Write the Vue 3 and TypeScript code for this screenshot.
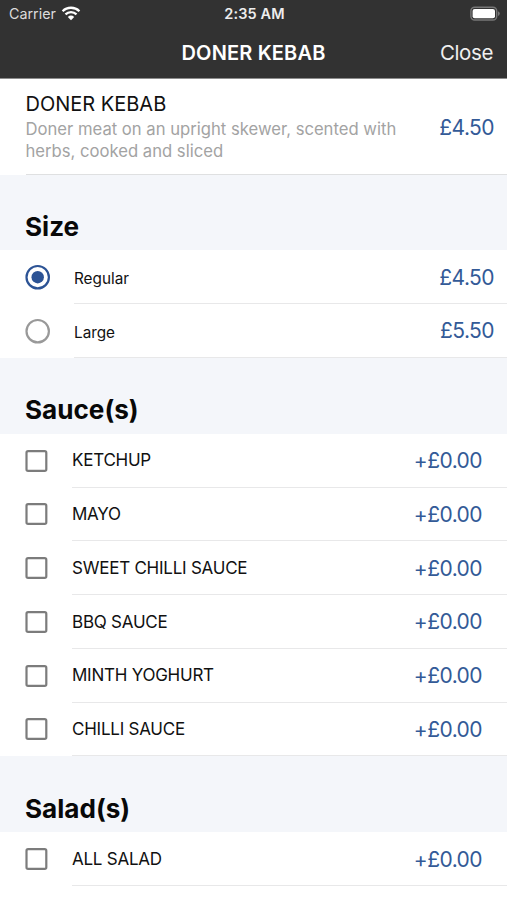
<script setup lang="ts">
import { ref } from 'vue'

interface SizeOption {
  name: string
  price: string
}

interface ExtraGroup {
  title: string
  options: SizeOption[]
}

const sizes: SizeOption[] = [
  { name: 'Regular', price: '£4.50' },
  { name: 'Large', price: '£5.50' },
]

const groups: ExtraGroup[] = [
  {
    title: 'Sauce(s)',
    options: ['KETCHUP', 'MAYO', 'SWEET CHILLI SAUCE', 'BBQ SAUCE', 'MINTH YOGHURT', 'CHILLI SAUCE'].map(
      (name) => ({ name, price: '+£0.00' }),
    ),
  },
  { title: 'Salad(s)', options: [{ name: 'ALL SALAD', price: '+£0.00' }] },
]

const selected = ref('Regular')
const extras = ref<string[]>([])

function toggle(name: string) {
  extras.value = extras.value.includes(name)
    ? extras.value.filter((n) => n !== name)
    : [...extras.value, name]
}
</script>

<template>
  <div class="screen">
    <header class="top">
      <div class="status">
        <div class="carrier">
          <span class="carrier-name">Carrier</span>
          <svg class="wifi" viewBox="0 0 20 15" width="20" height="15">
            <path d="M1.6 5.2 A12 12 0 0 1 18.4 5.2" />
            <path d="M4.5 8.4 A7.8 7.8 0 0 1 15.5 8.4" />
            <path class="dot" d="M6.8 10.9 A4.8 4.8 0 0 1 13.2 10.9 L10 14.2 Z" />
          </svg>
        </div>
        <span class="time">2:35 AM</span>
        <svg class="battery" viewBox="0 0 30 16" width="30" height="16">
          <rect class="shell" x="0.9" y="1.2" width="25.8" height="12.8" rx="3.8" />
          <rect class="charge" x="2.6" y="2.9" width="22.4" height="9.4" rx="2.1" />
          <path class="cap" d="M28 5.3 Q29.8 6 29.8 7.6 Q29.8 9.2 28 9.9 Z" />
        </svg>
      </div>
      <div class="nav">
        <span></span>
        <h1 class="nav-title">DONER KEBAB</h1>
        <button class="close" type="button">Close</button>
      </div>
    </header>

    <section class="product">
      <div class="product-info">
        <div class="product-name">DONER KEBAB</div>
        <div class="product-desc">Doner meat on an upright skewer, scented with<br />herbs, cooked and sliced</div>
      </div>
      <span class="price">£4.50</span>
    </section>

    <section class="group">
      <h2 class="group-title size-title">Size</h2>
      <div v-for="size in sizes" :key="size.name" class="row" @click="selected = size.name">
        <svg class="radio" :class="{ on: selected === size.name }" viewBox="0 0 26 26" width="26" height="26">
          <circle class="ring" cx="12.7" cy="13.2" r="11.2" />
          <circle v-if="selected === size.name" class="core" cx="12.7" cy="13.2" r="6.2" />
        </svg>
        <div class="row-body radio-body">
          <span class="size-name">{{ size.name }}</span>
          <span class="price">{{ size.price }}</span>
        </div>
      </div>
    </section>

    <section v-for="group in groups" :key="group.title" class="group">
      <h2 class="group-title">{{ group.title }}</h2>
      <div v-for="option in group.options" :key="option.name" class="row" @click="toggle(option.name)">
        <svg class="check" viewBox="0 0 23 22" width="23" height="22">
          <rect x="1.5" y="1.1" width="19.8" height="19.8" rx="1.6" />
          <path v-if="extras.includes(option.name)" d="M5.4 11 L9.9 15.5 L17.4 7" />
        </svg>
        <div class="row-body check-body">
          <span class="extra-name">{{ option.name }}</span>
          <span class="price extra-price">{{ option.price }}</span>
        </div>
      </div>
    </section>
  </div>
</template>

<style>
body {
  margin: 0;
  background: #fff;
}
</style>

<style scoped>
.screen {
  box-sizing: border-box;
  width: 507px;
  height: 900px;
  overflow: hidden;
  background: #fff;
  color: #111;
  font-family: Inter, "Liberation Sans", sans-serif;
}
.top {
  box-sizing: border-box;
  height: 79px;
  background: #323232;
  border-bottom: 1px solid #8c8c8c;
  color: #fff;
}
.status {
  display: grid;
  grid-template-columns: 1fr auto 1fr;
  align-items: center;
  height: 26px;
  padding: 1px 7px 0 9px;
  box-sizing: border-box;
}
.carrier {
  display: flex;
  align-items: center;
  gap: 5px;
}
.carrier-name {
  font-size: 14.3px;
  color: #dcdcdc;
}
.wifi path {
  fill: none;
  stroke: #fff;
  stroke-width: 2.3;
}
.wifi .dot {
  fill: #fff;
  stroke: none;
}
.time {
  font-size: 14.5px;
  font-weight: 600;
  letter-spacing: 0.1px;
  color: #ededed;
}
.battery {
  justify-self: end;
}
.shell {
  fill: none;
  stroke: #777;
  stroke-width: 1.4;
}
.charge {
  fill: #fff;
}
.cap {
  fill: #777;
}
.nav {
  display: grid;
  grid-template-columns: 1fr auto 1fr;
  align-items: center;
  height: 53px;
  padding: 0 14px;
}
.nav-title {
  margin: 0;
  font-size: 20px;
  font-weight: 600;
  letter-spacing: 0.15px;
  line-height: 24px;
}
.close {
  justify-self: end;
  padding: 0;
  border: 0;
  background: none;
  color: #f0f0f0;
  font: 400 20.5px/24px Inter, "Liberation Sans", sans-serif;
  letter-spacing: -0.4px;
}
.product {
  display: flex;
  justify-content: space-between;
  box-sizing: border-box;
  height: 96px;
  margin-left: 26px;
  padding-right: 13px;
  border-bottom: 1px solid #dfe0e1;
}
.product-info {
  margin-left: -0.5px;
  padding-top: 13px;
}
.product-name {
  font-size: 20px;
  line-height: 24px;
}
.product-desc {
  padding-top: 2px;
  color: #a3a3a3;
  font-size: 16.65px;
  line-height: 22px;
  white-space: nowrap;
}
.price {
  color: #335a97;
  font-size: 21px;
  letter-spacing: -0.55px;
  line-height: 26px;
}
.product .price {
  padding-top: 36px;
}
.group-title {
  box-sizing: border-box;
  height: 76px;
  margin: 0;
  padding: 35.5px 25px 0;
  background: #f4f6fa;
  color: #080808;
  font-size: 26.1px;
  font-weight: 700;
  line-height: 34px;
}
.size-title {
  height: 75.3px;
  padding-top: 35px;
}
.row {
  display: flex;
  align-items: stretch;
  height: 53.75px;
  padding-left: 25px;
}
.radio,
.check {
  flex: none;
  align-self: center;
}
.ring {
  fill: none;
  stroke: #999;
  stroke-width: 2.2;
}
.on .ring {
  stroke: #2c5395;
}
.core {
  fill: #2c5395;
}
.check rect,
.check path {
  fill: none;
  stroke: #7c7c7c;
  stroke-width: 2.2;
}
.row-body {
  display: flex;
  flex: 1;
  align-items: center;
  justify-content: space-between;
  border-bottom: 1px solid #e8e8e9;
}
.row .price {
  padding-top: 2px;
}
.radio-body {
  margin-left: 23px;
  padding-right: 13px;
}
.check-body {
  margin-left: 24px;
  padding-right: 25px;
}
.size-name {
  padding-top: 4px;
  font-size: 15.3px;
}
.extra-name {
  padding-top: 0.6px;
  font-size: 17px;
  letter-spacing: -0.24px;
}
</style>
